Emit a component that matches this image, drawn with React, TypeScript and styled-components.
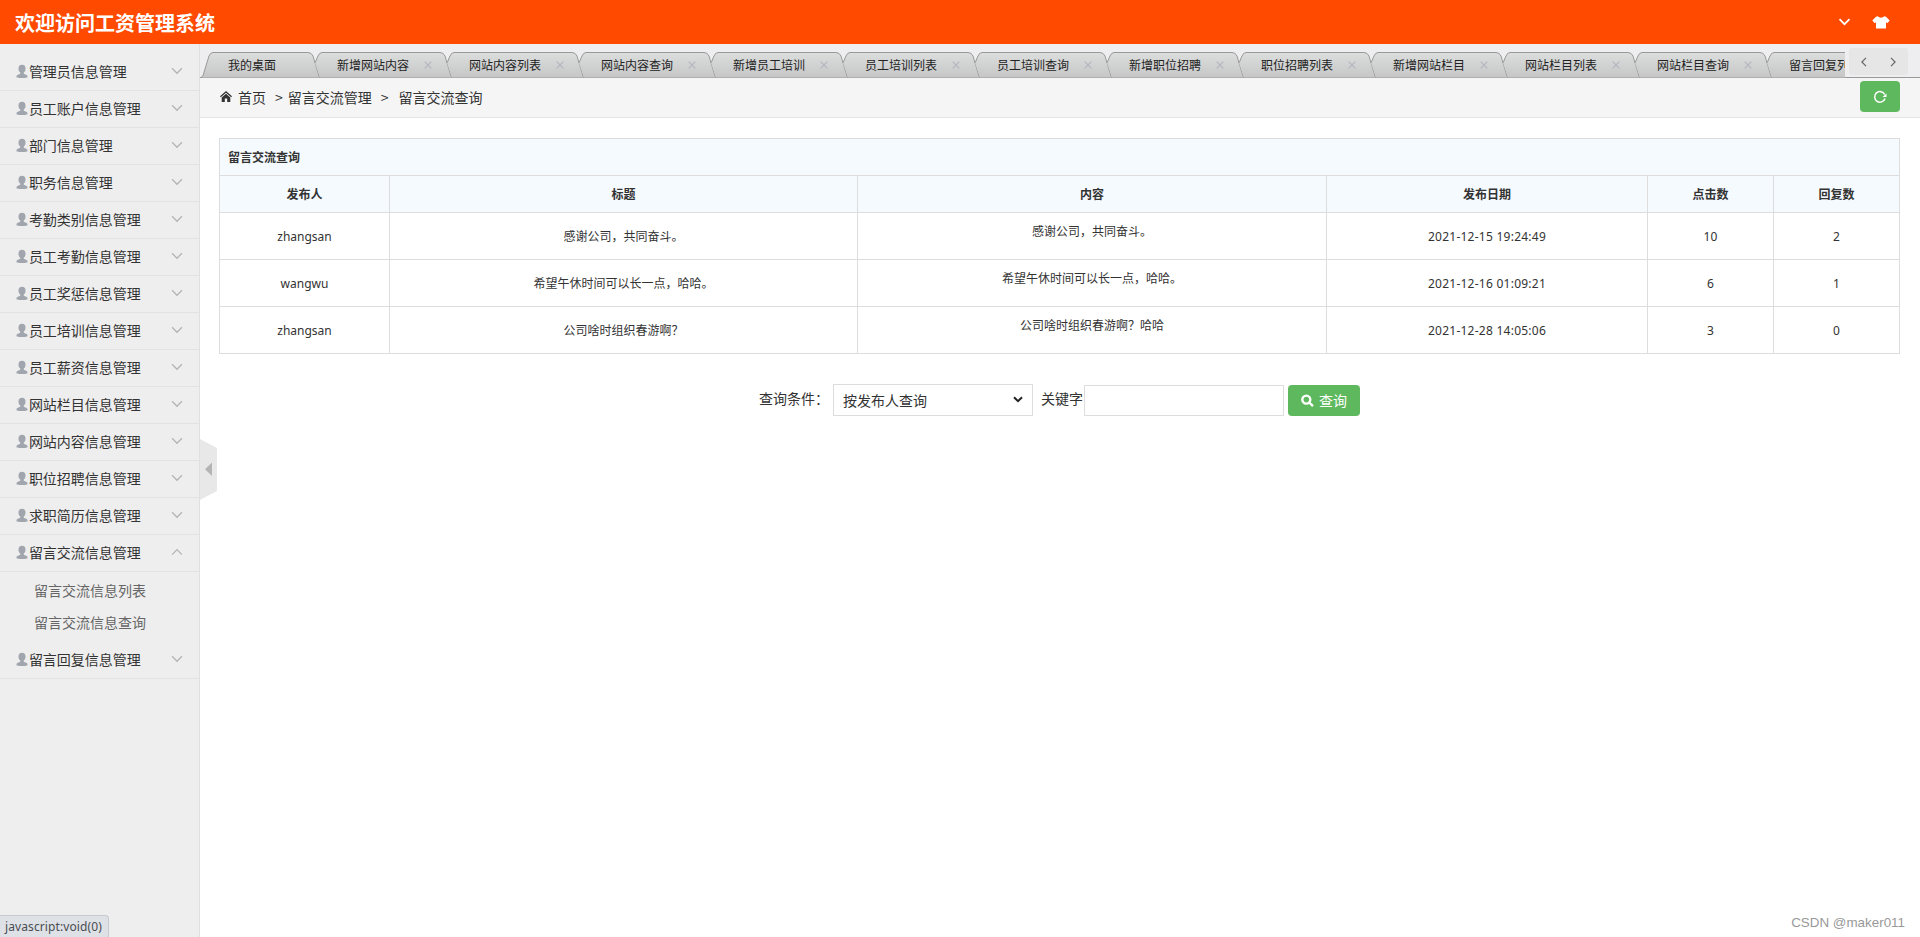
import React from 'react';
import styled, { createGlobalStyle } from 'styled-components';

const Global = createGlobalStyle`
  * { box-sizing: border-box; }
  html, body { margin: 0; padding: 0; }
  body { font-family: "Noto Sans", "Noto Sans CJK SC", sans-serif; font-size: 14px; color: #333; background: #fff; overflow: hidden; }
`;

const Page = styled.div`
  display: flex; flex-direction: column; width: 100%; height: 937px; position: relative; overflow: hidden;
`;
const Header = styled.header`
  flex: none; height: 44px; background: #ff4a00; color: #fff; display: flex; align-items: center;
  justify-content: space-between; padding: 0 30px 0 15px;
`;
const Title = styled.h1`
  margin: 0; font-size: 20px; line-height: 44px; font-weight: 700;
  font-family: "Noto Sans CJK SC", sans-serif; padding-top: 1px;
`;
const HeaderTools = styled.div`display: flex; align-items: center; gap: 21px;`;
const Body = styled.div`flex: 1; display: flex; min-height: 0;`;

const Sidebar = styled.nav`
  flex: none; width: 200px; background: #eee; border-right: 1px solid #e0e0e0; padding-top: 10px;
`;
const MenuRow = styled.div`
  height: 37px; border-bottom: 1px solid #e2e2e2; display: flex; align-items: center;
  padding: 0 16px 2px; color: #333; white-space: nowrap; font-size: 14px;
  svg { flex: none; }
`;
const MenuText = styled.span`flex: 1; line-height: 20px; font-family: "Noto Sans CJK SC", sans-serif;`;
const Submenu = styled.div`padding: 2px 0 4px;`;
const SubItem = styled.div`
  height: 32px; line-height: 32px; padding-left: 34px; color: #666; font-family: "Noto Sans CJK SC", sans-serif;
`;

const Main = styled.main`flex: 1; min-width: 0; display: flex; flex-direction: column; position: relative;`;
const TabBar = styled.div`
  flex: none; height: 34px; background: #eeeef0; border-bottom: 1px solid #999; display: flex; position: relative;
`;
const TabStrip = styled.div`
  flex: none; width: 1645px; height: 34px; padding-top: 8px; display: flex; overflow: hidden;
`;
const TabItem = styled.div<{ $w: number }>`
  flex: none; width: ${p => p.$w}px; height: 26px; position: relative;
  > svg { position: absolute; left: 0; top: 0; }
`;
const TabLabel = styled.span<{ $left: number }>`
  position: relative; display: flex; align-items: center; height: 25px; padding-left: ${p => p.$left}px;
  gap: 15px; font-size: 12px; line-height: 17px; color: #222; white-space: nowrap; font-family: "Noto Sans CJK SC", sans-serif;
`;
const TabArrows = styled.div`
  width: 75px; height: 33px; background: #eeeef0; padding: 4px 0 0 4px;
`;
const ArrowGroup = styled.div`
  width: 59px; height: 27px; border-radius: 3px; background: #e6e6e6; display: flex; align-items: center;
  justify-content: space-around; padding-right: 0;
`;

const Crumbs = styled.div`
  flex: none; height: 40px; background: #f5f5f5; border-bottom: 1px solid #e5e5e5; display: flex;
  align-items: center; padding: 0 20px 2px; white-space: pre; font-size: 14px;
`;
const CrumbText = styled.span<{ $gap: number }>`
  margin-left: ${p => p.$gap}px; line-height: 20px; font-family: "Noto Sans CJK SC", sans-serif;
`;
const Refresh = styled.button`
  margin-left: auto; width: 40px; height: 31px; border: 0; border-radius: 4px; background: #5eb95e;
  display: flex; align-items: center; justify-content: center; padding: 0;
`;

const Table = styled.table`
  width: 1681px; margin: 20px 0 0 19px; border-collapse: collapse; table-layout: fixed; font-size: 12px;
  th, td { border: 1px solid #ddd; padding: 0 8px; text-align: center; line-height: 18px; }
  th { background: #f5fafe; height: 37px; font-weight: 700; font-family: "Noto Sans CJK SC", sans-serif; }
  td { height: 47px; padding-top: 2px; }
`;
const Caption = styled.th`&&{ text-align: left; }`;
const Content = styled.p`margin: 0 0 10px;`;
const Digits = styled.span`letter-spacing: .25px;`;

const Search = styled.form`
  display: flex; align-items: flex-start; margin: 30px 0 0 559px; height: 33px;
  font-family: "Noto Sans CJK SC", sans-serif;
`;
const FieldLabel = styled.label<{ $w: number }>`width: ${p => p.$w}px; line-height: 29px; white-space: nowrap;`;
const Select = styled.div`
  width: 200px; height: 32px; border: 1px solid #ddd; display: flex; align-items: center;
  justify-content: space-between; padding: 0 9px 1px 9px; margin-right: 8px;
`;
const Keyword = styled.input`
  width: 200px; height: 31px; border: 1px solid #ddd; margin: 1px 4px 0 0; padding: 0 4px; outline: none;
`;
const Submit = styled.button`
  width: 72px; height: 31px; margin-top: 1px; border: 0; border-radius: 4px; background: #5eb95e; color: #fff;
  font: inherit; font-size: 14px; display: flex; align-items: center; justify-content: center; gap: 5px; padding: 0 0 1px;
`;

const Toggle = styled.div`position: absolute; left: 0; top: 395px; width: 17px; height: 61px; svg { display: block; }`;
const Status = styled.div`
  position: absolute; left: 0; bottom: 0; width: 109px; height: 22px; background: #dee1e6; border: 1px solid #c6c9ce;
  border-left: 0; border-bottom: 0; border-radius: 0 4px 0 0; font-size: 12px; line-height: 21px; padding-left: 5px;
  color: #4a4d52; white-space: nowrap; letter-spacing: .1px;
`;
const Watermark = styled.div`
  position: absolute; right: 15px; bottom: 5px; font-size: 13.4px; line-height: 18px; color: #999;
  font-family: "Liberation Sans", sans-serif; white-space: nowrap;
`;

const UserIcon = () => (
  <svg width="12" height="15" viewBox="0 0 13 15" fill="#a0a5ae">
    <ellipse cx="6.5" cy="4.6" rx="3.8" ry="4.4" />
    <path d="M4.6 7h3.8v3l3.2 1.2q1 .5 1 2.4Q7 15.6.4 13.6q0-1.9 1-2.4L4.6 10z" />
  </svg>
);
const Chevron = ({ up = false }: { up?: boolean }) => (
  <svg width="12" height="8" viewBox="0 0 13 8" fill="none" stroke="#b4b4b4" strokeWidth="1.4">
    <path d={up ? 'M1.2 6.8 6.5 1.4l5.3 5.4' : 'M1.2 1 6.5 6.4 11.8 1'} />
  </svg>
);
const TabShape = ({ w, first }: { w: number; first?: boolean }) => {
  const left = first
    ? 'M1 25.5Q2.5 25 3.2 23L9 4Q10.5.5 13 .5'
    : 'M0 11 3 4Q4.5 .5 7 .5';
  const outline = `${left}H${w - 7}Q${w - 3.5} .5 ${w - 2} 4L${w + 4} 24q.5 1.5 1.5 1.5`;
  return (
    <svg width={w + 8} height="26" viewBox={`0 0 ${w + 8} 26`} overflow="visible">
      <defs>
        <linearGradient id="tab" x1="0" y1="0" x2="0" y2="1">
          <stop offset="0" stopColor="#dcdedd" /><stop offset="1" stopColor="#c6c6c7" />
        </linearGradient>
      </defs>
      <path d={`${outline}${first ? 'z' : 'H5z'}`} fill="url(#tab)" />
      <path d={outline} fill="none" stroke="#999" />
    </svg>
  );
};
const CloseX = () => (
  <svg width="8" height="8" viewBox="0 0 8 8" stroke="#b3b6bf" strokeWidth="1.2"><path d="M.7.7l6.6 6.6M7.3.7.7 7.3" /></svg>
);

const tabs = ['新增网站内容', '网站内容列表', '网站内容查询', '新增员工培训', '员工培训列表', '员工培训查询', '新增职位招聘',
  '职位招聘列表', '新增网站栏目', '网站栏目列表', '网站栏目查询', '留言回复列表'];
const menu = ['管理员信息管理', '员工账户信息管理', '部门信息管理', '职务信息管理', '考勤类别信息管理', '员工考勤信息管理',
  '员工奖惩信息管理', '员工培训信息管理', '员工薪资信息管理', '网站栏目信息管理', '网站内容信息管理', '职位招聘信息管理',
  '求职简历信息管理', '留言交流信息管理', '留言回复信息管理'];
const openMenu = '留言交流信息管理';
const rows = [
  ['zhangsan', '感谢公司，共同奋斗。', '感谢公司，共同奋斗。', '2021-12-15 19:24:49', '10', '2'],
  ['wangwu', '希望午休时间可以长一点，哈哈。', '希望午休时间可以长一点，哈哈。', '2021-12-16 01:09:21', '6', '1'],
  ['zhangsan', '公司啥时组织春游啊？', '公司啥时组织春游啊？哈哈', '2021-12-28 14:05:06', '3', '0'],
];

const cell = (text: string, column: number) => {
  if (column === 2) return <Content>{text}</Content>;
  return column > 2 ? <Digits>{text}</Digits> : text;
};

export default function App() {
  return (
    <Page>
      <Global />
      <Header>
        <Title>欢迎访问工资管理系统</Title>
        <HeaderTools>
          <svg width="13" height="8" viewBox="0 0 13 8" fill="none" stroke="#fff" strokeWidth="1.8"><path d="M1.5 1.2 6.5 6.2l5-5" /></svg>
          <svg width="18" height="13" viewBox="0 0 18 13" fill="#fff">
            <path d="M5.5.3Q9 3.2 12.5.3L14 .8 17.7 4.5 15.3 7.2 14 6.3V12.500H4V6.3L2.700 7.2.3 4.5 4 .8z" />
          </svg>
        </HeaderTools>
      </Header>
      <Body>
        <Sidebar>
          {menu.map(name => (
            <React.Fragment key={name}>
              <MenuRow><UserIcon /><MenuText>&#8202;{name}</MenuText><Chevron up={name === openMenu} /></MenuRow>
              {name === openMenu && (
                <Submenu><SubItem>留言交流信息列表</SubItem><SubItem>留言交流信息查询</SubItem></Submenu>
              )}
            </React.Fragment>
          ))}
        </Sidebar>
        <Main>
          <TabBar>
            <TabStrip>
              <TabItem $w={115}><TabShape w={115} first /><TabLabel $left={28}>我的桌面</TabLabel></TabItem>
              {tabs.map(t => (
                <TabItem key={t} $w={132}><TabShape w={132} /><TabLabel $left={22}>{t}<CloseX /></TabLabel></TabItem>
              ))}
            </TabStrip>
            <TabArrows>
              <ArrowGroup>
                <svg width="6" height="10" viewBox="0 0 6 10" fill="none" stroke="#666" strokeWidth="1.2"><path d="M5 .8.9 5 5 9.2" /></svg>
                <svg width="6" height="10" viewBox="0 0 6 10" fill="none" stroke="#666" strokeWidth="1.2"><path d="M1 .8 5.1 5 1 9.2" /></svg>
              </ArrowGroup>
            </TabArrows>
          </TabBar>
          <Crumbs>
            <svg width="12" height="11" viewBox="0 0 12 11" fill="#333">
              <path d="M6 0 12 5.3 11.2 6.3 6 1.8.8 6.3 0 5.3z" /><path d="M6 2.7 10.3 6.4V11H7.2V7.6H4.8V11H1.7V6.4z" />
            </svg>
            <CrumbText $gap={6}>首页</CrumbText>
            <CrumbText $gap={9}>&gt;</CrumbText>
            <CrumbText $gap={5}>留言交流管理</CrumbText>
            <CrumbText $gap={9}>&gt;</CrumbText>
            <CrumbText $gap={10}>留言交流查询</CrumbText>
            <Refresh>
              <svg width="14" height="14" viewBox="0 0 14 14" fill="none" stroke="#fff" strokeWidth="1.5">
                <path d="M12 8.5A5.3 5.3 0 1 1 11.7 4.5" /><path d="M9.500 7h4V3.500z" fill="#fff" stroke="none" />
              </svg>
            </Refresh>
          </Crumbs>
          <Table>
            <colgroup><col width="170" /><col width="468" /><col width="469" /><col width="321" /><col width="126" /><col width="126" /></colgroup>
            <thead>
              <tr><Caption colSpan={6}>留言交流查询</Caption></tr>
              <tr>{['发布人', '标题', '内容', '发布日期', '点击数', '回复数'].map(h => <th key={h}>{h}</th>)}</tr>
            </thead>
            <tbody>
              {rows.map((r, i) => (
                <tr key={i}>{r.map((c, j) => <td key={j}>{cell(c, j)}</td>)}</tr>
              ))}
            </tbody>
          </Table>
          <Search>
            <FieldLabel $w={74}>查询条件：</FieldLabel>
            <Select>按发布人查询
              <svg width="10" height="7" viewBox="0 0 10 7" fill="none" stroke="#222" strokeWidth="2"><path d="M1 1.2 5 5.2l4-4" /></svg>
            </Select>
            <FieldLabel $w={43}>关键字</FieldLabel>
            <Keyword aria-label="关键字" />
            <Submit type="button">
              <svg width="13" height="13" viewBox="0 0 13 13" fill="none" stroke="#fff" strokeWidth="2.4"><circle cx="5.3" cy="5.6" r="4" /><path d="M8.2 8.5 12 12.2" /></svg>
              查询
            </Submit>
          </Search>
          <Toggle>
            <svg width="17" height="61" viewBox="0 0 17 61"><path d="M0 0 17 9V52L0 61z" fill="#e8e8e8" /><path d="M12 23.5V37L5 30.2z" fill="#b4b4b4" /></svg>
          </Toggle>
        </Main>
      </Body>
      <Status>javascript:void(0)</Status>
      <Watermark>CSDN @maker011</Watermark>
    </Page>
  );
}
